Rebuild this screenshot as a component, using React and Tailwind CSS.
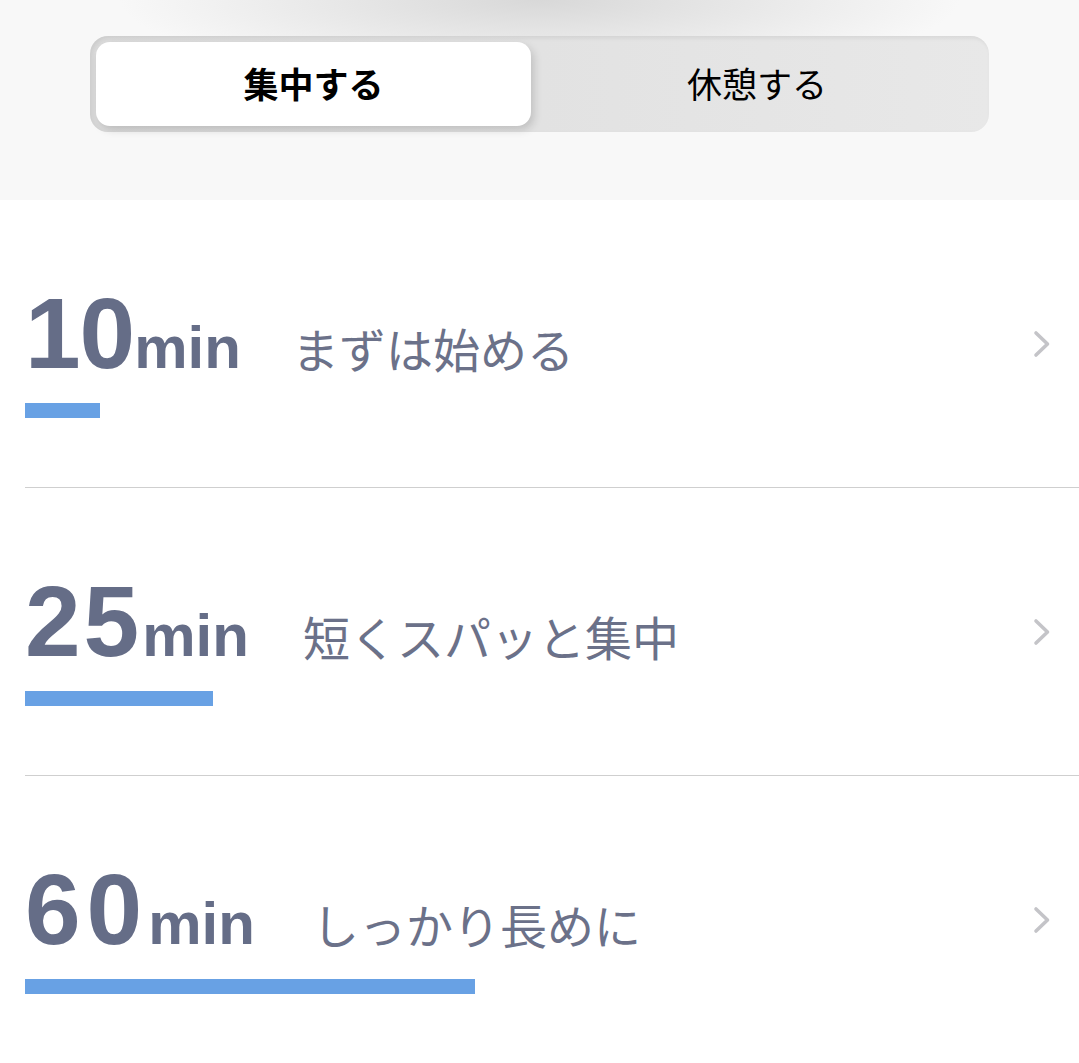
const durations = [
  { min: 10, label: 'まずは始める', track: 'tracking-[-1px]', gap: 'ml-[51px]' },
  { min: 25, label: '短くスパッと集中', track: 'tracking-[3px]', gap: 'ml-[54px]' },
  { min: 60, label: 'しっかり長めに', track: 'tracking-[6px]', gap: 'ml-[57px]' },
]

const jp = { fontFamily: '"Noto Sans CJK JP", "Noto Sans", sans-serif' }
const num = { fontFamily: '"Liberation Sans", Arial, sans-serif' }

function Toggle() {
  return (
    <div className="h-[200px] bg-[radial-gradient(ellipse_420px_80px_at_50%_0%,#d8d8d8,#f8f8f8)] pt-[36px] px-[90px]">
      <div className="flex h-[96px] rounded-[18px] bg-[linear-gradient(90deg,#dcdcdc,#e8e8e8)] p-[6px] shadow-[inset_2px_2px_4px_rgba(0,0,0,0.08)]">
        <div
          className="flex w-[435px] items-center justify-center rounded-[14px] bg-white pb-[2px] text-[35px] font-bold text-black shadow-[3px_4px_8px_rgba(0,0,0,0.15)]"
          style={jp}
        >
          集中する
        </div>
        <div className="flex flex-1 items-center justify-center pb-[2px] text-[35px] text-black" style={jp}>
          休憩する
        </div>
      </div>
    </div>
  )
}

function Chevron() {
  return (
    <svg width="20" height="28" viewBox="0 0 20 28" fill="none" className="text-[#c4c4c8]">
      <path d="M4 3 L15.5 14 L4 25" stroke="currentColor" strokeWidth="3.6" strokeLinecap="round" strokeLinejoin="round" />
    </svg>
  )
}

function Row({ min, label, track, gap, last }) {
  return (
    <div className={`ml-[25px] flex h-[288px] items-center pr-[27px] ${last ? '' : 'border-b border-[#cfcfcf]'}`}>
      <div className="flex-1 self-start pt-[83px]">
        <div className="flex h-[100px] items-baseline leading-none text-[#656d87]">
          <span className={`${track} text-[100px] font-bold`} style={num}>{min}</span>
          <span className="text-[60px] font-bold" style={num}>min</span>
          <span className={`${gap} text-[47px] font-normal text-[#6b7189]`} style={jp}>{label}</span>
        </div>
        <div className="mt-[20px] h-[15px] bg-[#68a1e4]" style={{ width: min * 7.5 }} />
      </div>
      <Chevron />
    </div>
  )
}

export default function App() {
  return (
    <div className="min-h-[1063px] w-[1079px] bg-white">
      <Toggle />
      {durations.map((d, i) => (
        <Row key={d.min} {...d} last={i === durations.length - 1} />
      ))}
    </div>
  )
}
